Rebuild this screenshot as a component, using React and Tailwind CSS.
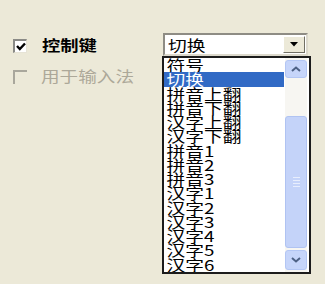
import React from "react";

const FONT = { fontFamily: '"Noto Sans CJK SC", "Noto Sans CJK TC", sans-serif' };

function CheckedBox() {
  return (
    <div className="w-[14px] h-[14px] border-t-2 border-l-2 border-[#8a8a86] border-r border-b border-r-[#e6e3d6] border-b-[#e6e3d6] bg-white flex items-center justify-center">
      <svg width="10" height="9" viewBox="0 0 10 9">
        <path d="M1 4 L3.8 7 L9 1.5" fill="none" stroke="#000" strokeWidth="2.4" />
      </svg>
    </div>
  );
}

function DisabledBox() {
  return (
    <div className="w-[14px] h-[14px] border-t-2 border-l-2 border-[#a9a79c] bg-[#ECE9D8]" />
  );
}

const items = [
  "符号",
  "切换",
  "拼音上翻",
  "拼音下翻",
  "汉字上翻",
  "汉字下翻",
  "拼音1",
  "拼音2",
  "拼音3",
  "汉字1",
  "汉字2",
  "汉字3",
  "汉字4",
  "汉字5",
  "汉字6",
];

function Chevron({ up }) {
  return (
    <svg width="10" height="6" viewBox="0 0 10 6">
      <path
        d={up ? "M1 5 L5 1.5 L9 5" : "M1 1 L5 4.5 L9 1"}
        fill="none"
        stroke="#4D6185"
        strokeWidth="2"
      />
    </svg>
  );
}

export default function App() {
  return (
    <div
      className="relative w-[325px] h-[284px] bg-[#ECE9D8] overflow-hidden pt-[33px] pl-[13px]"
      style={FONT}
    >
      <div className="flex h-[23px] items-center">
        <div className="w-[150px] flex items-center">
          <div className="mt-[2px]">
            <CheckedBox />
          </div>
          <div className="ml-[15px] w-[44px] origin-left scale-x-[1.22] text-[15px] font-bold leading-[15px] text-black whitespace-nowrap">
            控制键
          </div>
        </div>
        <div className="w-[145px] h-[23px] border-2 border-t-[#8e8c84] border-l-[#8e8c84] border-b-[#dcd9cc] border-r-[#dcd9cc] bg-white flex items-center">
          <div className="ml-[3px] w-[30px] origin-left scale-x-[1.25] text-[15px] leading-[15px] text-black whitespace-nowrap">
            切换
          </div>
          <div className="ml-auto mr-[1px] w-[22px] h-[17px] bg-[#ECE9D8] border border-t-white border-l-white border-b-[#716f64] border-r-[#716f64] flex items-center justify-center">
            <svg width="8" height="5" viewBox="0 0 8 5">
              <path d="M0 0 L8 0 L4 4.5 Z" fill="#000" />
            </svg>
          </div>
        </div>
      </div>

      <div className="flex h-[15px] items-center mt-[12px]">
        <div className="mt-[2px]">
          <DisabledBox />
        </div>
        <div className="ml-[14px] w-[75px] origin-left scale-x-[1.24] text-[15px] leading-[15px] text-[#aca899] whitespace-nowrap">
          用于输入法
        </div>
      </div>

      <div className="absolute left-[162px] top-[56px] w-[149px] h-[218px] border-2 border-[#1c1c1c] bg-white flex">
        <div className="w-[120px] overflow-hidden">
          <div className="w-[96px] origin-top-left scale-x-[1.25] flex flex-col">
            {items.map((t, i) => (
              <div
                key={t}
                className={
                  "h-[14.27px] pl-[2px] text-[15px] leading-[14.27px] whitespace-nowrap " +
                  (i === 1 ? "bg-[#316AC5] text-white" : "text-black")
                }
              >
                {t}
              </div>
            ))}
          </div>
        </div>
        <div className="w-[22px] ml-px pt-[2px] pb-[2px] flex flex-col bg-[#F7F6F2]">
          <div className="h-[18px] rounded-[3px] border border-[#B3C6F4] bg-[#C6D5FA] flex items-center justify-center">
            <Chevron up />
          </div>
          <div className="h-[38px]" />
          <div className="flex-1 rounded-[3px] border border-[#B0C3F2] bg-[#C4D3F9] flex flex-col items-center justify-center gap-[2px]">
            <div className="w-[7px] h-px bg-[#E8EEFD]" />
            <div className="w-[7px] h-px bg-[#E8EEFD]" />
            <div className="w-[7px] h-px bg-[#E8EEFD]" />
            <div className="w-[7px] h-px bg-[#E8EEFD]" />
          </div>
          <div className="h-[20px] mt-[2px] rounded-[3px] border border-[#B3C6F4] bg-[#C6D5FA] flex items-center justify-center">
            <Chevron />
          </div>
        </div>
      </div>
    </div>
  );
}
